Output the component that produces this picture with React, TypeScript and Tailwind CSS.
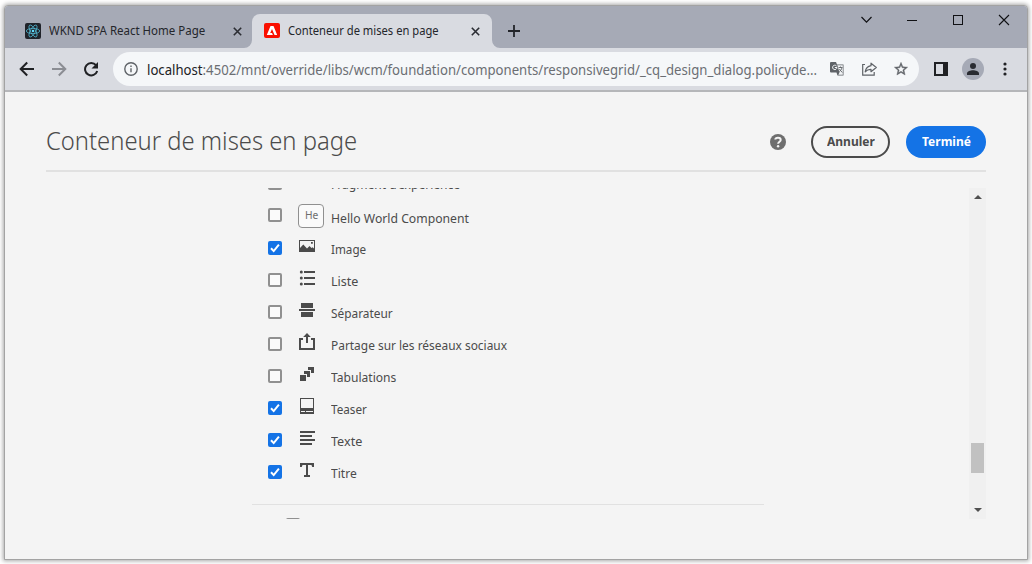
import { useLayoutEffect, useRef, useState, type ReactNode } from "react";

/** Single line of text condensed or widened to a fixed measure. */
function FitText({ width, className = "", children }: { width: number; className?: string; children: ReactNode }) {
  const ref = useRef<HTMLSpanElement>(null);
  const [scale, setScale] = useState(1);
  useLayoutEffect(() => {
    if (ref.current) setScale(width / ref.current.offsetWidth);
  }, [width]);
  return (
    <span className={`block shrink-0 whitespace-nowrap ${className}`} style={{ width }}>
      <span ref={ref} className="inline-block origin-left" style={{ transform: `scaleX(${scale})` }}>
        {children}
      </span>
    </span>
  );
}

const ReactLogo = () => (
  <svg width="16" height="16" viewBox="0 0 16 16" className="shrink-0">
    <rect width="16" height="16" rx="2" fill="#20232a" />
    <g fill="none" stroke="#51b5cf" strokeWidth="0.8">
      <ellipse cx="8" cy="8" rx="6.7" ry="2.6" />
      <ellipse cx="8" cy="8" rx="6.7" ry="2.6" transform="rotate(60 8 8)" />
      <ellipse cx="8" cy="8" rx="6.7" ry="2.6" transform="rotate(120 8 8)" />
    </g>
    <circle cx="8" cy="8" r="1.3" fill="#61dafb" />
  </svg>
);

const AdobeLogo = () => (
  <svg width="16" height="16" viewBox="0 0 16 16" className="shrink-0">
    <rect width="16" height="15" rx="2" fill="#fa0f00" />
    <path d="M6.5 3h3l3.700 9h-2.700L8 6l-1.800 4H8l.9 2H2.800z" fill="#fff" />
  </svg>
);

const Cross = () => (
  <svg width="9" height="9" viewBox="0 0 9 9" className="shrink-0">
    <path d="M.8.8l7.400 7.400M8.200.8L.8 8.200" stroke="#2b2d33" strokeWidth="1.6" />
  </svg>
);

function TitleBar() {
  return (
    <div className="flex h-[42px] shrink-0 bg-[#a6aab6]">
      <div className="flex h-[42px] w-[247px] items-center pt-[8px] pl-[20px]">
        <ReactLogo />
        <FitText width={156} className="ml-[8px] text-[12px] text-[#24262b]">WKND SPA React Home Page</FitText>
        <div className="ml-[28px]"><Cross /></div>
      </div>
      <div className="relative flex h-[34px] w-[240px] items-center self-end rounded-t-[8px] bg-[#d9dbe1] pl-[12px]">
        <svg width="8" height="8" viewBox="0 0 8 8" className="absolute bottom-0 -left-[8px]">
          <path d="M8 0v8H0a8 8 0 0 0 8-8z" fill="#d9dbe1" />
        </svg>
        <svg width="8" height="8" viewBox="0 0 8 8" className="absolute -right-[8px] bottom-0">
          <path d="M0 0v8h8a8 8 0 0 1-8-8z" fill="#d9dbe1" />
        </svg>
        <AdobeLogo />
        <FitText width={151} className="ml-[8px] text-[12px] text-[#24262b]">Conteneur de mises en page</FitText>
        <div className="ml-[32px]"><Cross /></div>
      </div>
      <svg width="12" height="12" viewBox="0 0 12 12" className="mt-[19px] ml-[16px]">
        <path d="M6 0v12M0 6h12" stroke="#222429" strokeWidth="1.8" />
      </svg>
      <div className="ml-auto flex pt-[8px] pr-[17px]">
        <svg width="149" height="12" viewBox="0 0 149 12" fill="none" stroke="#101114" strokeWidth="1">
          <path d="M.5 3l5 5.200 5-5.200" strokeWidth="1.2" />
          <path d="M46 6.500h10" />
          <rect x="92.5" y="1.5" width="9" height="9" />
          <path d="M138 1l10 10M148 1l-10 10" strokeWidth="1.1" />
        </svg>
      </div>
    </div>
  );
}

function ToolBar() {
  return (
    <div className="flex h-[44px] shrink-0 items-center border-b-2 border-[#b5b6b9] bg-[#d9dbe1]">
      <svg width="79" height="18" viewBox="0 0 79 18" className="ml-[14px] shrink-0" fill="none" strokeWidth="2">
        <path d="M15 9H2M8.200 2.500L1.700 9l6.500 6.500" stroke="#202124" />
        <path d="M33 9h13M39.800 2.500L46.300 9l-6.500 6.500" stroke="#8b8d93" />
        <path d="M77 5.200A6.200 6.200 0 1 0 78.200 11" stroke="#202124" />
        <path d="M79 2v6.500h-6.500z" fill="#202124" />
      </svg>
      <div className="ml-[15px] flex h-[34px] w-[806px] items-center rounded-full bg-[#f5f7f9] pl-[11px]">
        <svg width="14" height="14" viewBox="0 0 14 14" fill="none" stroke="#5f6368" strokeWidth="1.4" className="shrink-0">
          <circle cx="7" cy="7" r="6.2" />
          <path d="M7 6.300v4M7 3.500v1.500" />
        </svg>
        <FitText width={670} className="ml-[9px] text-[14px] text-[#6b6e73]">
          <span className="text-[#202124]">localhost</span>:4502/mnt/override/libs/wcm/foundation/components/responsivegrid/_cq_design_dialog.policyde...
        </FitText>
        <svg width="15" height="14" viewBox="0 0 15 14" className="ml-[13px] shrink-0">
          <path d="M1 0h5l1 2.500h6.500v11H7.500L6.500 10.500H1a1 1 0 0 1-1-1V1a1 1 0 0 1 1-1z" fill="#5f6368" />
          <path d="M7.300 3.300h5.500v9.500H8.300l1.200-2.300z" fill="#f1f3f5" />
          <path d="M6.500 4A2.200 2.200 0 1 0 7 5.500H4.800" fill="none" stroke="#f5f7f9" strokeWidth="1" />
          <path d="M8.500 5.500h4M10.500 4.500v1M11.800 5.500c0 2-1.300 3.200-2.500 4M9.300 7l3 3.500" fill="none" stroke="#5f6368" strokeWidth=".9" />
        </svg>
        <svg width="16" height="14" viewBox="0 0 16 14" className="ml-[17px] shrink-0" fill="none" stroke="#5f6368" strokeWidth="1.2">
          <path d="M3 2.500H.7v10.700h11.500V10" />
          <path d="M9 1.200l5.300 4.300L9 9.700V7.300C6.500 7.200 4.800 8 3.200 9.800 3.800 6.500 5.600 4.300 9 3.700z" strokeLinejoin="round" />
        </svg>
        <svg width="16" height="16" viewBox="0 0 24 24" className="ml-[15px] shrink-0">
          <path fill="#5f6368" d="M22 9.240l-7.190-.62L12 2 9.190 8.630 2 9.240l5.460 4.730L5.820 21 12 17.270 18.180 21l-1.630-7.030zM12 15.400l-3.760 2.270 1-4.280-3.320-2.880 4.380-.38L12 6.100l1.710 4.040 4.380.38-3.320 2.880 1 4.280z" stroke="#5f6368" strokeWidth=".6" />
        </svg>
      </div>
      <svg width="14" height="14" viewBox="0 0 14 14" className="ml-[15px] shrink-0">
        <path d="M0 0h14v14H0zM2 2v10h7V2z" fill="#202124" fillRule="evenodd" />
      </svg>
      <svg width="22" height="22" viewBox="0 0 22 22" className="ml-[14px] shrink-0">
        <circle cx="11" cy="11" r="11" fill="#a6aab6" />
        <circle cx="11" cy="8" r="3" fill="#292b31" />
        <path d="M5 17v-1.500C5 13.300 8.500 12.200 11 12.200s6 1.100 6 3.300V17z" fill="#292b31" />
      </svg>
      <svg width="4" height="14" viewBox="0 0 4 14" className="ml-[19px] shrink-0" fill="#202124">
        <circle cx="2" cy="2" r="1.600" />
        <circle cx="2" cy="7" r="1.600" />
        <circle cx="2" cy="12" r="1.600" />
      </svg>
    </div>
  );
}

const icons: Record<string, ReactNode> = {
  image: (
    <path fillRule="evenodd" d="M1 3h16v12H1zM2 4v7l3.300-3.500 3.700 4L11.500 9l2 2 1.200-.8L16 11.500V4zM13 5h1.800v1.800H13z" />
  ),
  list: (
    <>
      <path d="M6 2h11v2H6zM6 8h11v2H6zM6 14h11v2H6z" />
      <circle cx="3.300" cy="3" r="1.500" />
      <circle cx="3.300" cy="9" r="1.500" />
      <circle cx="3.300" cy="15" r="1.500" />
    </>
  ),
  separator: <path d="M3 2h12v5H3zM1 8h16v2H1zM3 11h12v5H3z" />,
  share: (
    <>
      <path d="M1 5h4v2H3v8h12V7h-2V5h4v12H1z" />
      <path d="M9 0l3.800 4H10v6H8V4H5.200z" />
    </>
  ),
  tabs: (
    <path d="M2 10h6v6H2zM6 6h6v6H9V9H6zM10 2h6v6h-3V5h-3z" />
  ),
  teaser: (
    <path fillRule="evenodd" d="M2 1h14v16H2zM3 2v9h12V2zM3 14v1h4v-1zM8 14v1h7v-1z" />
  ),
  text: <path d="M2 2h15v2H2zM2 6h12v2H2zM2 10h15v2H2zM2 14h12v2H2z" />,
  title: <path d="M2 2h14v4h-1.800L13.500 4H10v10h2v2H6v-2h2V4H4.500L3.800 6H2z" />,
};

function CheckBox({ checked }: { checked?: boolean }) {
  return checked ? (
    <span className="flex size-[14px] shrink-0 rounded-[2px] bg-[#1473e6]">
      <svg width="14" height="14" viewBox="0 0 14 14">
        <path d="M3 7.300l2.700 2.800 5.200-6.400" fill="none" stroke="#fff" strokeWidth="2" />
      </svg>
    </span>
  ) : (
    <span className="size-[14px] shrink-0 rounded-[2px] border-2 border-[#909090] bg-[#fafafa]" />
  );
}

type Item = { label: string; width: number; icon?: string; checked?: boolean };

const items: Item[] = [
  { label: "Image", width: 35, icon: "image", checked: true },
  { label: "Liste", width: 27, icon: "list" },
  { label: "Séparateur", width: 62, icon: "separator" },
  { label: "Partage sur les réseaux sociaux", width: 176, icon: "share" },
  { label: "Tabulations", width: 65, icon: "tabs" },
  { label: "Teaser", width: 36, icon: "teaser", checked: true },
  { label: "Texte", width: 31, icon: "text", checked: true },
  { label: "Titre", width: 26, icon: "title", checked: true },
];

const labelStyle = "pt-[1px] text-[13px] leading-[20px] text-[#4b4b4b]";

function ComponentList() {
  return (
    <div className="w-[512px]">
      <div className="-mt-[21px] flex h-[32px] items-center pl-[16px]">
        <CheckBox />
        <FitText width={129} className={`ml-[49px] ${labelStyle}`}>Fragment d’expérience</FitText>
      </div>
      <div className="flex h-[33px] items-center pb-[2px] pl-[16px]">
        <CheckBox />
        <span className="mt-[2px] ml-[16px] flex h-[24px] w-[26px] items-center justify-center rounded-[4px] border border-[#909090] bg-[#fafafa] text-[11px] text-[#6e6e6e]">
          <FitText width={13}>He</FitText>
        </span>
        <FitText width={138} className="ml-[7px] pt-[7px] text-[13px] leading-[20px] text-[#4b4b4b]">Hello World Component</FitText>
      </div>
      {items.map((item) => (
        <div key={item.label} className="flex h-[32px] items-center pl-[16px]">
          <CheckBox checked={item.checked} />
          <svg width="18" height="18" viewBox="0 0 18 18" fill="#4b4b4b" className="mb-[4px] ml-[16px] shrink-0">
            {item.icon && icons[item.icon]}
          </svg>
          <FitText width={item.width} className={`ml-[15px] ${labelStyle}`}>{item.label}</FitText>
        </div>
      ))}
      <div className="mt-[16px] border-t border-[#e1e1e1] pt-[13px] pl-[34px]">
        <CheckBoxEdge />
      </div>
    </div>
  );
}

const CheckBoxEdge = () => (
  <div className="size-[14px] rounded-[2px] border-2 border-[#909090]" />
);

function ScrollBar() {
  return (
    <div className="ml-auto flex w-[17px] flex-col items-center bg-[#f0f0f0]">
      <svg width="8" height="4" viewBox="0 0 8 4" className="mt-[7px]">
        <path d="M4 0l4 4H0z" fill="#505050" />
      </svg>
      <div className="mt-[244px] h-[30px] w-[13px] bg-[#c1c1c1]" />
      <svg width="8" height="4" viewBox="0 0 8 4" className="mt-[35px]">
        <path d="M0 0h8L4 4z" fill="#505050" />
      </svg>
    </div>
  );
}

export default function App() {
  return (
    <div className="h-[564px] w-[1032px] overflow-hidden bg-white pt-[5px] pl-[4px] font-['Noto_Sans','Open_Sans',sans-serif]">
      <div className="flex h-[555px] w-[1024px] flex-col overflow-hidden rounded-t-[4px] border border-[#a3a3a3] bg-[#f4f4f4] shadow-[0_0_4px_1px_rgba(0,0,0,0.35)]">
        <TitleBar />
        <ToolBar />
        <main className="flex flex-col px-[41px]">
          <header className="flex h-[80px] items-center border-b-2 border-[#e1e1e1] pt-[22px]">
            <h1 className="-mt-[4px]">
              <FitText width={311} className="text-[26px] leading-[36px] font-light text-[#4b4b4b]">Conteneur de mises en page</FitText>
            </h1>
            <svg width="16" height="16" viewBox="0 0 16 16" className="ml-auto">
              <circle cx="8" cy="8" r="8" fill="#6e6e6e" />
              <path d="M5.300 5.500C5.500 3.300 10.700 3.100 10.700 5.900c0 1.700-2.600 1.900-2.600 3.800" fill="none" stroke="#f4f4f4" strokeWidth="2" />
              <circle cx="8.100" cy="12.200" r="1.200" fill="#f4f4f4" />
            </svg>
            <button className="ml-[25px] flex h-[32px] w-[79px] items-center justify-center rounded-full border-2 border-[#4b4b4b] pb-[1px] text-[13px] font-bold text-[#4b4b4b]">
              <FitText width={48}>Annuler</FitText>
            </button>
            <button className="ml-[16px] flex h-[32px] w-[80px] items-center justify-center rounded-full bg-[#1473e6] pb-[1px] text-[13px] font-bold text-white">
              <FitText width={49}>Terminé</FitText>
            </button>
          </header>
          <div className="mt-[16px] flex h-[331px] overflow-hidden pl-[206px]">
            <ComponentList />
            <ScrollBar />
          </div>
        </main>
      </div>
    </div>
  );
}
